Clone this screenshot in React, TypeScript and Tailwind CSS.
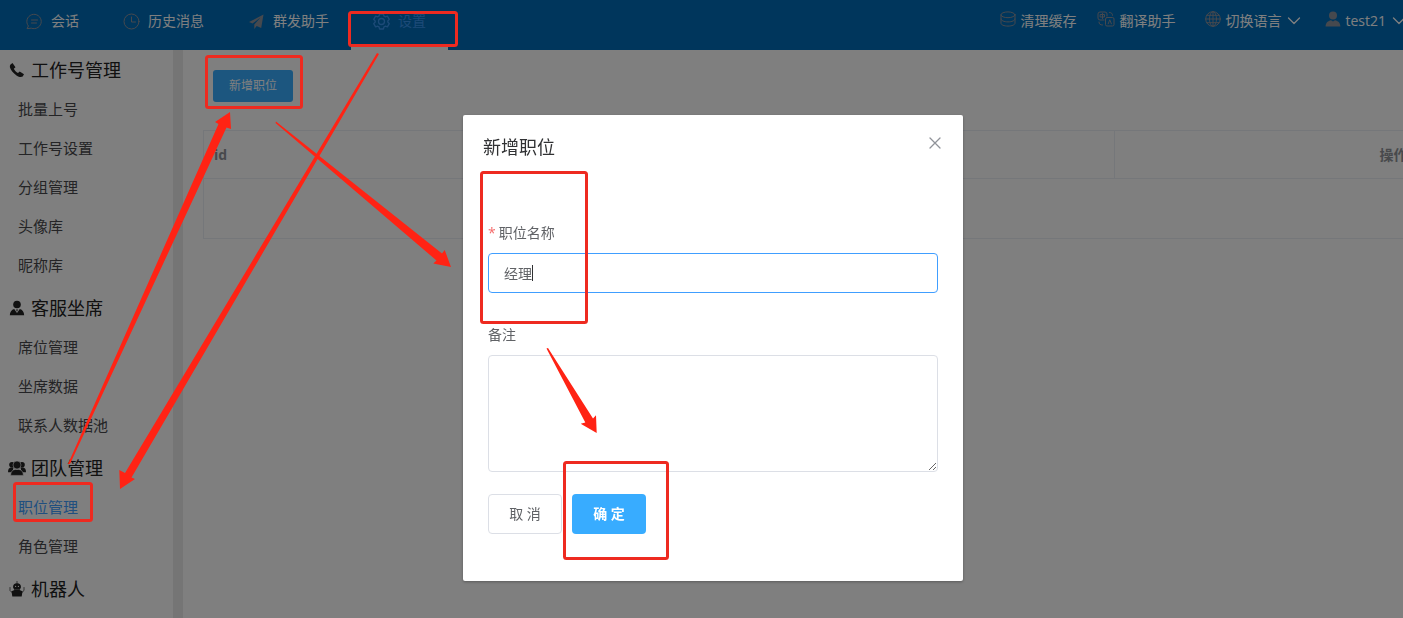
import { useState } from 'react';
import type { ReactNode } from 'react';

const line = {
  fill: 'none',
  stroke: 'currentColor',
  strokeLinecap: 'round',
  strokeLinejoin: 'round',
} as const;

function ChatIcon() {
  return (
    <svg className="w-[17px] h-[17px]" viewBox="0 0 17 17" {...line}>
      <path d="M1.2 15.3 2.4 13A7.2 7.2 0 1 1 5.6 15.3Z" />
      <path d="M5.5 7h6M5.5 10h5" />
    </svg>
  );
}

function ClockIcon() {
  return (
    <svg className="w-[17px] h-[17px]" viewBox="0 0 17 17" {...line}>
      <circle cx="8.5" cy="8.5" r="7.5" />
      <path d="M8.5 4v5h4" />
    </svg>
  );
}

function PlaneIcon() {
  return (
    <svg className="w-[17px] h-[17px]" viewBox="0 0 17 17" fill="currentColor">
      <path d="M15.5 1.5 1 9l3.5 1.6 8-6.1-6.2 7V16l2.4-3 4.5 2Z" />
    </svg>
  );
}

function GearIcon() {
  return (
    <svg className="w-[17px] h-[17px]" viewBox="0 0 17 17" strokeWidth={1.3} {...line}>
      <path d="M6.6 1h3.8l.6 2.1 1.3.7 2.1-.6 1.9 3.2L14.8 8v1l1.5 1.6-1.9 3.2-2.1-.6-1.3.7-.6 2.1H6.6L6 13.9l-1.3-.7-2.1.6-1.9-3.2L2.2 9V8L.7 6.4l1.9-3.2 2.1.6L6 3.1Z" />
      <circle cx="8.5" cy="8.5" r="3" />
    </svg>
  );
}

function CacheIcon() {
  return (
    <svg className="w-4 h-4" viewBox="0 0 16 16" {...line}>
      <ellipse cx="8" cy="3.8" rx="7" ry="2.9" />
      <path d="M1 3.8v8.4c0 1.6 3.1 2.9 7 2.9s7-1.3 7-2.9V3.8M1 8c0 1.6 3.1 2.9 7 2.9S15 9.6 15 8" />
    </svg>
  );
}

function TranslateIcon() {
  return (
    <svg className="w-[18px] h-4" viewBox="0 0 18 16" {...line}>
      <path d="M10 5V3a2 2 0 0 0-2-2H3a2 2 0 0 0-2 2v4a2 2 0 0 0 2 2h4" />
      <path d="M3.5 3.5h4V6h-4ZM5.5 2.5v5" />
      <rect x="8.5" y="6.5" width="8.5" height="8.5" rx="1.5" />
      <path d="m11.2 12.8 1.6-4 1.6 4M12.5 1.5c2 0 3 1 3 2.8M2 11c0 2 1 3 3.5 3" />
    </svg>
  );
}

function GlobeIcon() {
  return (
    <svg className="w-4 h-4" viewBox="0 0 16 16" {...line}>
      <circle cx="8" cy="8" r="7.3" />
      <ellipse cx="8" cy="8" rx="3.5" ry="7.3" />
      <path d="M8 .7v14.6M.7 8h14.6M1.8 4.3h12.4M1.8 11.7h12.4" />
    </svg>
  );
}

function UserIcon() {
  return (
    <svg className="w-4 h-4" viewBox="0 0 16 16" fill="currentColor">
      <circle cx="8" cy="4.5" r="4" />
      <path d="M.6 15.5c0-4 2.6-5.8 5.4-6.3l2 1.3 2-1.3c2.8.5 5.4 2.3 5.4 6.3Z" />
    </svg>
  );
}

function CaretIcon() {
  return (
    <svg className="w-3.5 h-3.5" viewBox="0 0 14 14" strokeWidth={1.3} {...line}>
      <path d="M1.5 4 7 9.5 12.5 4" />
    </svg>
  );
}

function PhoneIcon() {
  return (
    <svg className="w-4 h-4" viewBox="0 0 16 16" fill="currentColor">
      <path d="M1.5 2.6 3.5 1l3 4.2-1.7 1.6c.9 1.8 2.3 3.2 4.2 4.2l1.7-1.5 4.3 2.7-1.3 2.2c-1.2.8-3.6.7-6.2-1C4.2 11.3 1.5 8 .9 5.3.7 4.1.9 3.2 1.5 2.6Z" />
    </svg>
  );
}

function AgentIcon() {
  return (
    <svg className="w-4 h-4" viewBox="0 0 16 16" fill="currentColor">
      <circle cx="8" cy="4.5" r="3.8" />
      <path d="M.8 15.3c.2-3.6 1.6-5.4 4.4-6.3L8 13l2.8-4c2.8.9 4.2 2.7 4.4 6.3Z" />
      <path d="m7 9.5 1 2.2 1-2.2Z" />
    </svg>
  );
}

function TeamIcon() {
  return (
    <svg className="w-[18px] h-4" viewBox="0 0 18 16" fill="currentColor">
      <circle cx="4" cy="4.8" r="2.8" />
      <circle cx="14" cy="4.8" r="2.8" />
      <path d="M0 12.2c0-2.9 1-4.4 3-4.6h2.5l-1 4.6ZM18 12.2c0-2.9-1-4.4-3-4.6h-2.5l1 4.6Z" />
      <g stroke="#fff" strokeWidth="0.6">
        <path d="M2.6 15.4c0-3.8 2-5.7 4.7-6h3.4c2.7.3 4.7 2.2 4.7 6Z" />
        <circle cx="9" cy="5" r="4" />
      </g>
    </svg>
  );
}

function RobotIcon() {
  return (
    <svg className="w-4 h-4" viewBox="0 0 16 16" fill="currentColor">
      <path d="M8 0v3M1 6.5v3l2 2M15 6.5v3l-2 2" strokeWidth={0.7} {...line} />
      <path d="M4 6.3a4 4 0 0 1 8 0L10.8 8.7H5.2ZM2.5 10.2 5.500 9h5l3 1.200-.8 5.300H3.300Z" />
      <circle cx="6.6" cy="5.4" r=".6" fill="#fff" />
      <circle cx="9.4" cy="5.4" r=".6" fill="#fff" />
    </svg>
  );
}

const tabs = [
  { label: '会话', icon: <ChatIcon /> },
  { label: '历史消息', icon: <ClockIcon /> },
  { label: '群发助手', icon: <PlaneIcon /> },
  { label: '设置', icon: <GearIcon /> },
];

const menu = [
  {
    title: '工作号管理',
    icon: <PhoneIcon />,
    items: ['批量上号', '工作号设置', '分组管理', '头像库', '昵称库'],
  },
  {
    title: '客服坐席',
    icon: <AgentIcon />,
    items: ['席位管理', '坐席数据', '联系人数据池'],
  },
  { title: '团队管理', icon: <TeamIcon />, items: ['职位管理', '角色管理'] },
  { title: '机器人', icon: <RobotIcon />, items: [] },
];

function HeaderAction({
  icon,
  label,
  caret,
}: {
  icon: ReactNode;
  label: string;
  caret?: boolean;
}) {
  return (
    <button type="button" className="flex items-center whitespace-nowrap">
      <span className="mr-1 mb-1 text-[#8d929c]">{icon}</span>
      {label}
      {caret && (
        <span className="ml-1.5">
          <CaretIcon />
        </span>
      )}
    </button>
  );
}

function Header() {
  const [active, setActive] = useState('设置');

  return (
    <header className="flex justify-between h-[50px] shrink-0 bg-[#006cb8] text-white text-sm">
      <nav className="flex pl-1">
        {tabs.map((tab) => (
          <button
            key={tab.label}
            type="button"
            onClick={() => setActive(tab.label)}
            className={
              tab.label === active
                ? 'flex items-center gap-2 px-[22px] pb-1 border-b-4 border-white text-[#3a95f0]'
                : 'flex items-center gap-2 px-[22px] pb-1 border-b-4 border-transparent'
            }
          >
            <span className={tab.label === active ? '' : 'text-[#8d929c]'}>{tab.icon}</span>
            {tab.label}
          </button>
        ))}
      </nav>
      <div className="flex pr-5 pb-2">
        <div className="flex gap-[21px] mr-[30px]">
          <HeaderAction icon={<CacheIcon />} label="清理缓存" />
          <HeaderAction icon={<TranslateIcon />} label="翻译助手" />
        </div>
        <div className="flex gap-6">
          <HeaderAction icon={<GlobeIcon />} label="切换语言" caret />
          <HeaderAction icon={<UserIcon />} label="test21" caret />
        </div>
      </div>
    </header>
  );
}

function Sidebar() {
  return (
    <aside className="flex flex-col gap-[3px] w-[183px] shrink-0 border-r-10 border-[#eaeaea] text-[#48494c]">
      {menu.map((group) => (
        <section key={group.title}>
          <h2 className="flex items-center h-10 pl-2 text-lg text-[#222]">
            <span className="flex justify-center w-[18px] mr-[5px]">{group.icon}</span>
            {group.title}
          </h2>
          <ul>
            {group.items.map((item) => (
              <li key={item}>
                <a
                  href="#"
                  className={
                    item === '职位管理'
                      ? 'flex items-center h-[39px] pl-[18px] text-[15px] text-[#409eff]'
                      : 'flex items-center h-[39px] pl-[18px] text-[15px]'
                  }
                >
                  {item}
                </a>
              </li>
            ))}
          </ul>
        </section>
      ))}
    </aside>
  );
}

function PositionDialog() {
  const [name, setName] = useState('经理');
  const [remark, setRemark] = useState('');

  return (
    <div className="fixed inset-y-0 left-0 -right-[23px] flex justify-center items-start pt-[115px] bg-black/50">
      <div
        role="dialog"
        aria-labelledby="dialog-title"
        className="w-[500px] rounded-xs bg-white shadow-[0_1px_3px_rgba(0,0,0,0.3)] text-sm text-[#606266]"
      >
        <div className="flex justify-between px-5 pt-5 pb-2.5">
          <h1 id="dialog-title" className="text-lg leading-6 text-[#303133]">
            新增职位
          </h1>
          <button type="button" aria-label="关闭" className="flex h-4 text-[#909399]">
            <svg className="w-4 h-4" viewBox="0 0 16 16" strokeWidth={1.3} {...line}>
              <path d="m3 3 10 10M13 3 3 13" />
            </svg>
          </button>
        </div>
        <form className="px-[25px] pt-11 pb-[47px]" onSubmit={(e) => e.preventDefault()}>
          <label htmlFor="name" className="block leading-10">
            <span className="mr-[3px] text-[#f56c6c]">*</span>
            职位名称
          </label>
          <div className="relative mb-[22px]">
            <input
              id="name"
              type="text"
              value={name}
              onChange={(e) => setName(e.target.value)}
              className="block w-full h-10 px-[15px] border border-[#409eff] rounded outline-none caret-transparent"
            />
            <span className="absolute left-11 top-3 w-px h-4 bg-[#303133]" />
          </div>
          <label htmlFor="remark" className="block leading-10">
            备注
          </label>
          <textarea
            id="remark"
            value={remark}
            onChange={(e) => setRemark(e.target.value)}
            className="block w-full h-[117px] px-[15px] py-1 mb-[22px] border border-[#dcdfe6] rounded outline-none resize-y"
          />
          <div className="flex gap-2.5">
            <button type="button" className="w-[74px] h-10 border border-[#dcdfe6] rounded">
              取 消
            </button>
            <button type="submit" className="w-[74px] h-10 rounded bg-[#38acff] font-bold text-white">
              确 定
            </button>
          </div>
        </form>
      </div>
    </div>
  );
}

// Red boxes and arrows that walk through the steps, drawn freely over the page
function Guide() {
  return (
    <svg className="fixed left-0 top-0 pointer-events-none" width="1403" height="618" aria-hidden="true">
      <g fill="none" stroke="#ee2a20" strokeWidth="3">
        <rect x="349.5" y="12.5" width="107" height="33" rx="2" />
        <rect x="206.5" y="56.5" width="95" height="51" rx="2" />
        <rect x="14.5" y="483.5" width="77" height="37" rx="2" />
        <rect x="481.5" y="172.5" width="105" height="150" rx="2" />
        <rect x="564.5" y="462.5" width="103" height="96" rx="2" />
      </g>
      <g fill="#ff2314">
        <polygon points="68,464 218.5,124 215,122 230,112 231,129 226.5,127.5 70,464" />
        <polygon points="377,53 125,473 119.3,470 120,489 135,479 131.5,477.5 379,54" />
        <polygon points="276,121.5 442,253.5 444.7,250 451,267 433.3,263.5 436.5,260.5 275.5,123" />
        <polygon points="548,348 593,418.5 596,415.3 596.7,433 580.7,423.7 585.3,422.5 546.5,348.5" />
      </g>
    </svg>
  );
}

export default function App() {
  return (
    <div className="h-screen overflow-hidden bg-white font-['Open_Sans','Noto_Sans_CJK_SC',sans-serif]">
      <div className="flex flex-col h-full w-[calc(100%+23px)]">
        <Header />
        <div className="flex flex-1 min-h-0">
          <Sidebar />
          <main className="flex-1 min-w-0 overflow-hidden p-5">
            <button
              type="button"
              className="block w-20 h-8 ml-2.5 mb-7 rounded-[3px] bg-[#38acff] text-xs text-white"
            >
              新增职位
            </button>
            <table className="w-[1470px] table-fixed border-collapse border border-[#ebeef5] text-sm text-[#909399]">
              <thead>
                <tr className="h-12 border-b border-[#ebeef5]">
                  <th className="px-2.5 text-left">id</th>
                  <th className="w-[558px] border-l border-[#ebeef5]">操作</th>
                </tr>
              </thead>
              <tbody>
                <tr className="h-[60px]">
                  <td colSpan={2} />
                </tr>
              </tbody>
            </table>
          </main>
        </div>
      </div>
      <PositionDialog />
      <Guide />
    </div>
  );
}
